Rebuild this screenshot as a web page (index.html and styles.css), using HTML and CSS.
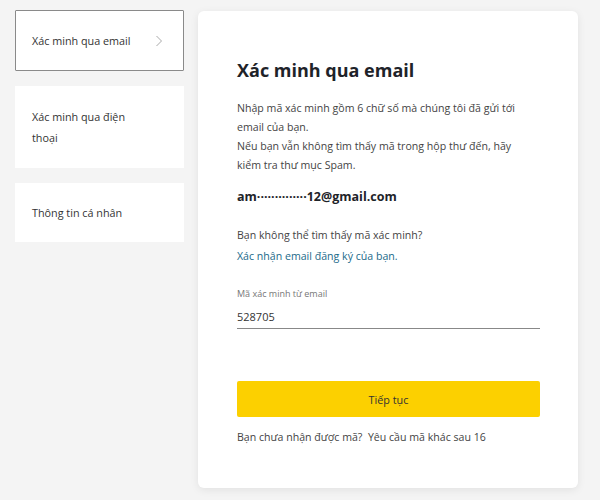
FILE: index.html
```html
<!DOCTYPE html>
<html lang="vi">
<head>
<meta charset="utf-8">
<link rel="stylesheet" href="styles.css">
</head>
<body>
<div class="page">
  <nav class="side">
    <div class="step active">
      <span class="step-text">Xác minh qua email</span>
      <svg class="chev" width="8" height="12" viewBox="0 0 8 12"><path d="M1.5 1 L6.5 6 L1.5 11" fill="none" stroke="#aaa" stroke-width="1"/></svg>
    </div>
    <div class="step tall">
      <span class="step-text">Xác minh qua điện thoại</span>
    </div>
    <div class="step short">
      <span class="step-text">Thông tin cá nhân</span>
    </div>
  </nav>
  <main class="card">
    <h1 class="title">Xác minh qua email</h1>
    <p class="desc">Nhập mã xác minh gồm 6 chữ số mà chúng tôi đã gửi tới email của bạn.<br>Nếu bạn vẫn không tìm thấy mã trong hộp thư đến, hãy kiểm tra thư mục Spam.</p>
    <p class="email">am··············12@gmail.com</p>
    <p class="help">Bạn không thể tìm thấy mã xác minh?<br><a class="link">Xác nhận email đăng ký của bạn.</a></p>
    <div class="field">
      <div class="label">Mã xác minh từ email</div>
      <div class="value">528705</div>
    </div>
    <button class="btn">Tiếp tục</button>
    <p class="resend">Bạn chưa nhận được mã?&nbsp; Yêu cầu mã khác sau 16</p>
  </main>
</div>
</body>
</html>
```
FILE: styles.css
```css
html, body {
  margin: 0;
  padding: 0;
  background: #f4f4f4;
}
body {
  font-family: "Open Sans", "Noto Sans", sans-serif;
  color: #333;
  width: 600px;
  height: 500px;
  overflow: hidden;
}
.page {
  display: flex;
  align-items: flex-start;
  padding: 10px 0 0 15px;
  gap: 14px;
}
.side {
  width: 169px;
  display: flex;
  flex-direction: column;
  gap: 15px;
}
.step {
  background: #fff;
  display: flex;
  align-items: center;
  justify-content: space-between;
  padding: 19px 20px 19px 16px;
  font-size: 10.8px;
  line-height: 21px;
  color: #333;
  border: 1px solid transparent;
}
.step.active {
  border-color: #8a8a8a;
  border-radius: 1px;
}
.step.short {
  padding-top: 18px;
  padding-bottom: 18px;
}
.step-text {
  max-width: 112px;
}
.tall .step-text {
  max-width: 104px;
}
.chev {
  display: block;
}
.card {
  width: 380px;
  height: 477px;
  box-sizing: border-box;
  margin-top: 1px;
  background: #fff;
  border-radius: 6px;
  box-shadow: 0 2px 8px rgba(0,0,0,0.08);
  padding: 46px 38px 0 39px;
}
.title {
  margin: 0;
  font-size: 18px;
  font-weight: 700;
  color: #1e2329;
  line-height: 26px;
}
.desc {
  margin: 16px 0 0;
  max-width: 280px;
  font-size: 10.6px;
  line-height: 19px;
  color: #444;
}
.email {
  margin: 12px 0 0;
  font-size: 12.5px;
  font-weight: 700;
  color: #1e2329;
  line-height: 20px;
}
.help {
  margin: 18px 0 0;
  font-size: 10.6px;
  line-height: 21px;
  color: #444;
}
.link {
  color: #1b6a8a;
}
.field {
  margin-top: 20px;
  border-bottom: 1px solid #888;
  padding-bottom: 3px;
}
.label {
  font-size: 9px;
  color: #777;
  line-height: 14px;
}
.value {
  margin-top: 8px;
  font-size: 11px;
  color: #333;
  line-height: 16px;
}
.btn {
  display: block;
  margin-top: 52px;
  width: 100%;
  height: 36px;
  border: none;
  border-radius: 2px;
  background: #fcd000;
  color: #333;
  font-family: inherit;
  font-size: 10.8px;
}
.resend {
  margin: 11px 0 0;
  font-size: 10.6px;
  line-height: 18px;
  color: #444;
}
```
